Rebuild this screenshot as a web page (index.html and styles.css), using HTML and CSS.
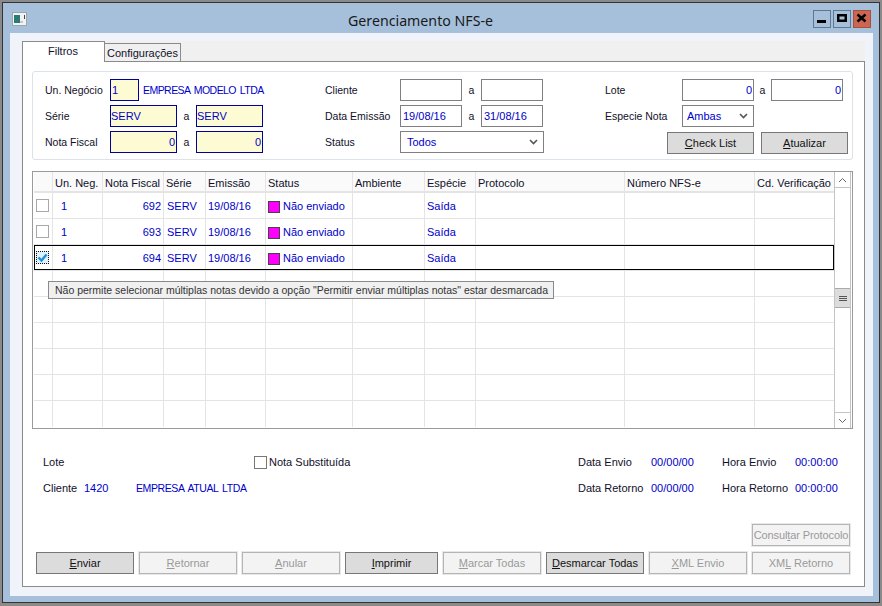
FILE: index.html
```html
<!DOCTYPE html>
<html lang="pt-BR">
<head>
<meta charset="utf-8">
<title>Gerenciamento NFS-e</title>
<link rel="stylesheet" href="styles.css">
</head>
<body>
<div class="window">
  <header class="titlebar">
    <svg class="app-icon" width="15" height="14" viewBox="0 0 15 14"><rect x="0.5" y="0.5" width="14" height="13" fill="#f2f2f2" stroke="#9aa6b0"/><rect x="2" y="3" width="6" height="8" fill="#2c7a78"/><rect x="8" y="9" width="3" height="2" fill="#c8c8c8"/><rect x="12" y="3" width="1" height="4" fill="#444"/></svg>
    <h1 class="title">Gerenciamento NFS-e</h1>
    <div class="controls">
      <button class="ctl"><svg width="16" height="16" viewBox="0 0 16 16"><rect x="3" y="9" width="9" height="3" fill="#000"/></svg></button>
      <button class="ctl"><svg width="16" height="16" viewBox="0 0 16 16"><path d="M3 3h10v8H3z M5.500 5.500v3h5v-3z" fill="#000" fill-rule="evenodd"/></svg></button>
      <button class="ctl ctl-close"><svg width="16" height="16" viewBox="0 0 16 16"><path d="M3.500 3.500l8 7M11.500 3.500l-8 7" stroke="#000" stroke-width="2.500" fill="none"/></svg></button>
    </div>
  </header>

  <div class="client">
    <div class="tabs">
      <div class="tab tab-active">Filtros</div>
      <div class="tab">Configurações</div>
    </div>
    <main class="panel">
      <section class="filters">
        <div class="col col-1">
          <div class="row"><label class="lbl">Un. Negócio</label><input class="fld req w-unit" value="1" readonly><span class="val val-company">EMPRESA MODELO LTDA</span></div>
          <div class="row"><label class="lbl">Série</label><input class="fld req w-67 tight" value="SERV" readonly><span class="to">a</span><input class="fld req w-67 tight" value="SERV" readonly></div>
          <div class="row"><label class="lbl">Nota Fiscal</label><input class="fld req w-67 num" value="0" readonly><span class="to">a</span><input class="fld req w-67 num" value="0" readonly></div>
        </div>
        <div class="col col-2">
          <div class="row"><label class="lbl">Cliente</label><input class="fld w-62" readonly><span class="to">a</span><input class="fld w-62" readonly></div>
          <div class="row"><label class="lbl">Data Emissão</label><input class="fld w-62 date" value="19/08/16" readonly><span class="to">a</span><input class="fld w-62 date" value="31/08/16" readonly></div>
          <div class="row"><label class="lbl">Status</label><div class="select w-144"><span>Todos</span><svg width="9" height="6" viewBox="0 0 9 6"><path d="M1 1l3.500 3.500L8 1" stroke="#555" stroke-width="1.600" fill="none"/></svg></div></div>
        </div>
        <div class="col col-3">
          <div class="row"><label class="lbl">Lote</label><input class="fld w-72 num" value="0" readonly><span class="to to-narrow">a</span><input class="fld w-72 num" value="0" readonly></div>
          <div class="row"><label class="lbl">Especie Nota</label><div class="select select-small w-72"><span>Ambas</span><svg width="9" height="6" viewBox="0 0 9 6"><path d="M1 1l3.500 3.500L8 1" stroke="#555" stroke-width="1.600" fill="none"/></svg></div></div>
          <div class="row row-actions"><button class="btn"><u>C</u>heck List</button><button class="btn"><u>A</u>tualizar</button></div>
        </div>
      </section>

      <section class="grid">
        <div class="grid-body">
          <div class="grow ghead"><div></div><div>Un. Neg.</div><div>Nota Fiscal</div><div>Série</div><div>Emissão</div><div>Status</div><div>Ambiente</div><div>Espécie</div><div>Protocolo</div><div>Número NFS-e</div><div>Cd. Verificação</div></div>
          <div class="grow"><div class="c-check"><span class="check"></span></div><div class="c-unit">1</div><div class="c-num">692</div><div class="c-serie">SERV</div><div class="c-date">19/08/16</div><div class="c-status"><span class="swatch"></span>Não enviado</div><div></div><div class="c-kind">Saída</div><div></div><div></div><div></div></div>
          <div class="grow"><div class="c-check"><span class="check"></span></div><div class="c-unit">1</div><div class="c-num">693</div><div class="c-serie">SERV</div><div class="c-date">19/08/16</div><div class="c-status"><span class="swatch"></span>Não enviado</div><div></div><div class="c-kind">Saída</div><div></div><div></div><div></div></div>
          <div class="grow grow-sel"><div class="c-check"><span class="check check-on"><svg width="13" height="13" viewBox="0 0 13 13"><path d="M2.500 6.500l3 3 5-6" stroke="#1e8fd8" stroke-width="2.400" fill="none"/></svg></span></div><div class="c-unit">1</div><div class="c-num">694</div><div class="c-serie">SERV</div><div class="c-date">19/08/16</div><div class="c-status"><span class="swatch"></span>Não enviado</div><div></div><div class="c-kind">Saída</div><div></div><div></div><div></div></div>
          <div class="grow"><div></div><div></div><div></div><div></div><div></div><div></div><div></div><div></div><div></div><div></div><div></div></div>
          <div class="grow"><div></div><div></div><div></div><div></div><div></div><div></div><div></div><div></div><div></div><div></div><div></div></div>
          <div class="grow"><div></div><div></div><div></div><div></div><div></div><div></div><div></div><div></div><div></div><div></div><div></div></div>
          <div class="grow"><div></div><div></div><div></div><div></div><div></div><div></div><div></div><div></div><div></div><div></div><div></div></div>
          <div class="grow"><div></div><div></div><div></div><div></div><div></div><div></div><div></div><div></div><div></div><div></div><div></div></div>
          <div class="grow grow-last"><div></div><div></div><div></div><div></div><div></div><div></div><div></div><div></div><div></div><div></div><div></div></div>
        </div>
        <div class="scrollbar">
          <div class="sb-btn"><svg width="9" height="6" viewBox="0 0 9 6"><path d="M1 5l3.500-3.500L8 5" stroke="#666" fill="none"/></svg></div>
          <div class="sb-thumb"><i></i><i></i><i></i></div>
          <div class="sb-btn sb-down"><svg width="9" height="6" viewBox="0 0 9 6"><path d="M1 1l3.500 3.500L8 1" stroke="#666" fill="none"/></svg></div>
        </div>
        <div class="tooltip">Não permite selecionar múltiplas notas devido a opção "Permitir enviar múltiplas notas" estar desmarcada</div>
      </section>

      <section class="info">
        <div class="info-row">
          <span class="i-label i-w-41">Lote</span>
          <span class="i-check-wrap"><span class="check check-plain"></span><span class="i-label">Nota Substituída</span></span>
          <span class="i-label i-w-73 i-dates">Data Envio</span><span class="val i-w-71">00/00/00</span>
          <span class="i-label i-w-73">Hora Envio</span><span class="val">00:00:00</span>
        </div>
        <div class="info-row">
          <span class="i-label i-w-41">Cliente</span><span class="val i-w-52">1420</span><span class="val i-client">EMPRESA ATUAL LTDA</span>
          <span class="i-label i-w-73">Data Retorno</span><span class="val i-w-71">00/00/00</span>
          <span class="i-label i-w-73">Hora Retorno</span><span class="val">00:00:00</span>
        </div>
      </section>

      <div class="consult"><button class="btn btn-off">Consul<u>t</u>ar Protocolo</button></div>
      <footer class="actions">
        <button class="btn btn-action"><u>E</u>nviar</button>
        <button class="btn btn-action btn-off"><u>R</u>etornar</button>
        <button class="btn btn-action btn-off"><u>A</u>nular</button>
        <button class="btn btn-action btn-short"><u>I</u>mprimir</button>
        <button class="btn btn-action btn-off"><u>M</u>arcar Todas</button>
        <button class="btn btn-action"><u>D</u>esmarcar Todas</button>
        <button class="btn btn-action btn-off"><u>X</u>ML Envio</button>
        <button class="btn btn-action btn-off">XM<u>L</u> Retorno</button>
      </footer>
    </main>
  </div>
</div>
</body>
</html>
```
FILE: styles.css
```css
* { box-sizing: border-box; }
html, body { margin: 0; padding: 0; }
body {
  width: 882px;
  height: 606px;
  overflow: hidden;
  font-family: "Liberation Sans", Arial, sans-serif;
  font-size: 11px;
  color: #10102a;
}
.window {
  width: 882px;
  height: 606px;
  background: #a6c0dc;
  border: solid #8a8a8a;
  border-width: 2px 2px 3px 2px;
  display: flex;
  flex-direction: column;
  padding: 1px 7px 7px 8px;
  box-shadow: inset 0 0 0 1px #333;
}
.titlebar {
  height: 30px;
  flex: none;
  display: flex;
  align-items: center;
  position: relative;
  padding-left: 2px;
}
.app-icon { flex: none; margin-top: 1px; }
.title {
  position: absolute;
  left: 338px;
  top: 8px;
  margin: 0;
  font-family: "Noto Sans", sans-serif;
  font-weight: 400;
  font-size: 14.200px;
  line-height: 20px;
  color: #1a1a1a;
}
.controls {
  margin-left: auto;
  margin-right: 2px;
  margin-top: 1px;
  display: flex;
  gap: 2px;
}
.ctl {
  width: 18px;
  height: 18px;
  padding: 0;
  border: 1px solid #5f7890;
  background: #a6c0dc;
  display: flex;
  align-items: center;
  justify-content: center;
}
.ctl-close { background: #cc6650; border-color: #a85040; }
.client {
  flex: 1;
  background: #f0f3fa;
  padding: 8px 8px 9px 12px;
  display: flex;
  flex-direction: column;
  min-height: 0;
}
.tabs {
  height: 20px;
  flex: none;
  display: flex;
  align-items: flex-start;
  background: #f0f0f0;
  position: relative;
  z-index: 1;
}
.tab {
  width: 76px;
  height: 18px;
  margin-top: 2px;
  border: 1px solid #8a8a8a;
  border-left: 0;
  border-bottom: 0;
  padding-left: 2px;
  line-height: 19px;
  white-space: nowrap;
}
.tab-active {
  width: 83px;
  height: 21px;
  margin-top: 0;
  background: #fff;
  border-left: 1px solid #8a8a8a;
  padding-left: 25px;
  line-height: 19px;
}
.panel {
  flex: 1;
  background: #fff;
  border: 1px solid #8a8a8a;
  padding: 9px 0 0 9px;
  display: flex;
  flex-direction: column;
  min-height: 0;
}
.filters {
  width: 821px;
  height: 89px;
  flex: none;
  display: flex;
  border: 1px solid #dbe2ea;
  border-radius: 3px;
  padding: 7px 0 0 12px;
  font-size: 10.500px;
}
.col { display: flex; flex-direction: column; gap: 4px; flex: none; }
.col-1 { width: 280px; }
.col-2 { width: 280px; }
.row { display: flex; align-items: center; height: 22px; }
.lbl { flex: none; width: 65px; }
.col-2 .lbl { width: 75px; }
.col-3 .lbl { width: 77px; }
.fld {
  flex: none;
  height: 22px;
  border: 1px solid #808080;
  background: #fff;
  color: #0000c8;
  font: inherit;
  font-size: 11px;
  padding: 0 2px;
  outline: none;
  min-width: 0;
}
.req { background: #fdfbd3; border-color: #0000a0; }
.tight { padding: 0; }
.num { text-align: right; padding: 0 1px; }
.date { padding: 0 2px; }
.w-unit { width: 29px; padding: 0 1px; }
.w-67 { width: 67px; }
.w-62 { width: 62px; }
.w-72 { width: 72px; }
.w-144 { width: 144px; }
.to { flex: none; width: 19px; text-align: center; }
.to-narrow { width: 17px; }
.val { color: #0000c8; white-space: nowrap; }
.val-company {
  margin-left: 4px;
  font-size: 10.500px;
  letter-spacing: -0.550px;
  word-spacing: 1.500px;
}
.select {
  flex: none;
  height: 22px;
  border: 1px solid #808080;
  background: #fff;
  color: #0000c8;
  font-size: 11px;
  display: flex;
  align-items: center;
  justify-content: space-between;
  padding: 0 5px 0 6px;
}
.select-small { padding-left: 4px; }
.row-actions {
  margin-left: 62px;
  margin-top: 1px;
  gap: 7px;
}
.btn {
  flex: none;
  width: 87px;
  height: 22px;
  padding: 0;
  border: 1px solid #777;
  background: #dcdcdc;
  color: #111;
  font-family: inherit;
  font-size: 11px;
  line-height: 20px;
  white-space: nowrap;
}
.btn-off {
  background: #f3f3f3;
  border-color: #b4b4b4;
  color: #9a9a9a;
  box-shadow: 0 0 0 1px #e8e8e8;
}
.grid {
  width: 821px;
  height: 258px;
  flex: none;
  margin-top: 11px;
  border: 1px solid #9a9a9a;
  padding: 0 1px;
  display: flex;
  position: relative;
}
.grid-body { width: 800px; flex: none; }
.grow {
  display: grid;
  grid-template-columns: 19px 50px 61px 42px 60px 87px 72px 51px 149px 130px 79px;
  height: 26px;
  border-bottom: 1px solid #e4e4e4;
  color: #0000c8;
  line-height: 27px;
}
.grow > div {
  border-right: 1px solid #e4e4e4;
  padding-left: 3px;
  min-width: 0;
  white-space: nowrap;
}
.grow > div:last-child { border-right: 0; }
.ghead {
  height: 21px;
  background: #fafafa;
  color: #10102a;
  line-height: 22px;
  border-bottom: 2px solid #e4e4e4;
}
.ghead > div { padding-left: 2px; }
.grow-sel { position: relative; }
.grow-sel::after {
  content: "";
  position: absolute;
  inset: 0;
  border: 1px solid #000;
  pointer-events: none;
}
.grow-last { border-bottom: 0; }
.grow .c-check { padding: 6px 0 0 2px; line-height: 0; }
.grow .c-unit { padding-left: 8px; }
.grow .c-num { text-align: right; padding: 0 2px 0 0; }
.grow .c-serie { padding-left: 3px; }
.grow .c-date { padding-left: 2px; }
.grow .c-kind { padding-left: 2px; }
.grow .c-status { display: flex; align-items: center; padding-left: 2px; }
.check {
  display: inline-block;
  width: 13px;
  height: 13px;
  border: 1px solid #a8a8a8;
  background: #fff;
}
.check-on {
  border: 1px dotted #111;
  background: #dff1fb;
  position: relative;
}
.check-on svg { position: absolute; left: -1px; top: -1px; }
.swatch {
  flex: none;
  width: 12px;
  height: 12px;
  background: #ff00ff;
  border: 1px solid #444;
  margin-right: 3px;
}
.scrollbar {
  width: 17px;
  flex: none;
  border-left: 1px solid #c4c4c4;
  border-right: 1px solid #c4c4c4;
  background: #fff;
  display: flex;
  flex-direction: column;
}
.sb-btn {
  height: 16px;
  flex: none;
  border-bottom: 1px solid #c4c4c4;
  display: flex;
  align-items: center;
  justify-content: center;
}
.sb-down {
  margin-top: auto;
  border-bottom: 0;
  border-top: 1px solid #c4c4c4;
}
.sb-thumb {
  margin-top: 100px;
  height: 20px;
  flex: none;
  background: #dcdcdc;
  border-top: 1px solid #aaa;
  border-bottom: 1px solid #aaa;
  display: flex;
  flex-direction: column;
  align-items: center;
  justify-content: center;
  gap: 1px;
}
.sb-thumb i { display: block; width: 8px; height: 1px; background: #555; }
.tooltip {
  position: absolute;
  left: 15px;
  top: 109px;
  width: 506px;
  height: 18px;
  background: #f0f0f0;
  border: 1px solid #8a8a8a;
  color: #333;
  font-size: 10.500px;
  line-height: 16px;
  padding-left: 6px;
  white-space: nowrap;
}
.info {
  flex: none;
  margin-top: 23px;
  padding-left: 11px;
  display: flex;
  flex-direction: column;
  gap: 6px;
}
.info-row { display: flex; align-items: center; height: 20px; }
.i-label { white-space: nowrap; }
.i-w-41 { width: 41px; flex: none; }
.i-w-52 { width: 52px; flex: none; }
.i-w-73 { width: 73px; flex: none; }
.i-w-71 { width: 71px; flex: none; }
.i-check-wrap {
  width: 324px;
  flex: none;
  margin-left: 170px;
  display: flex;
  align-items: center;
  gap: 2px;
}
.check-plain { border-color: #777; flex: none; }
.i-client {
  width: 442px;
  flex: none;
  font-size: 10.500px;
  letter-spacing: -0.400px;
  word-spacing: 1.500px;
}
.consult {
  flex: none;
  margin-top: 26px;
  padding-left: 720px;
  height: 22px;
}
.consult .btn { width: 98px; letter-spacing: -0.100px; }
.actions {
  flex: none;
  margin-top: 6px;
  padding-left: 4px;
  display: flex;
  gap: 5px;
}
.btn-action { width: 98px; height: 22px; }
.btn-short { width: 93px; }
```
